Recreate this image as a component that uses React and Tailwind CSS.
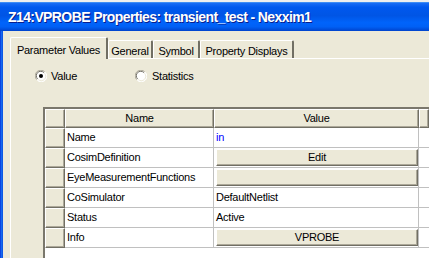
import React from "react";

const raised =
  "bg-[#ece9d8] border-t border-l border-r border-b border-t-white border-l-white border-r-[#716f64] border-b-[#716f64] shadow-[inset_-1px_-1px_0_#aca899]";

const rows = [
  { name: "Name", value: "in", blue: true },
  { name: "CosimDefinition", value: "Edit", button: true },
  { name: "EyeMeasurementFunctions", value: "", button: true },
  { name: "CoSimulator", value: "DefaultNetlist" },
  { name: "Status", value: "Active" },
  { name: "Info", value: "VPROBE", button: true },
];

const Radio = ({ checked }) => (
  <svg width="12" height="12" viewBox="0 0 12 12">
    <circle cx="6" cy="6" r="5.5" fill="#ffffff" />
    <path d="M1.8 9.7 A5.2 5.2 0 0 1 9.7 1.8" fill="none" stroke="#aca899" strokeWidth="1" />
    <path d="M2.6 8.9 A4.2 4.2 0 0 1 8.9 2.6" fill="none" stroke="#716f64" strokeWidth="1" />
    <path d="M10.2 2.3 A5.2 5.2 0 0 1 2.3 10.2" fill="none" stroke="#ffffff" strokeWidth="1" />
    <path d="M9.4 3.1 A4.2 4.2 0 0 1 3.1 9.4" fill="none" stroke="#ece9d8" strokeWidth="1" />
    {checked && <circle cx="6" cy="6" r="2" fill="#000000" />}
  </svg>
);

const Tab = ({ label, width, selected }) => (
  <div
    className={
      selected
        ? "relative z-10 -mb-px h-[22px] flex items-start justify-center pt-[4px] bg-[#ece9d8] border-t border-l border-t-white border-l-white border-r-2 border-r-[#716f64] rounded-tl-[2px] rounded-tr-[2px]"
        : "h-[18px] flex items-start justify-center pt-[2px] bg-[#ece9d8] border-t border-l border-t-white border-l-white border-r-2 border-r-[#716f64] rounded-tl-[2px] rounded-tr-[2px]"
    }
    style={{ width }}
  >
    {label}
  </div>
);

export default function App() {
  return (
    <div className="w-[429px] h-[258px] overflow-hidden bg-[#ece9d8] flex flex-col font-['Liberation_Sans',Arial,sans-serif] text-[11px] tracking-[-0.25px] text-black">
      <div className="h-[2px] bg-[#eeeeee] shrink-0" />
      <div className="h-[29px] shrink-0 flex items-center pl-[8px] border-t border-t-[#3d8cf5] bg-[linear-gradient(to_bottom,#1a6df5_0%,#0058ee_15%,#0055e5_45%,#0064fb_70%,#0060f5_85%,#0043cc_100%)]">
        <span className="text-white font-bold text-[14px] tracking-[-0.6px] [text-shadow:1px_1px_0_#0a1e8c] whitespace-nowrap">
          Z14:VPROBE Properties: transient_test - Nexxim1
        </span>
      </div>

      <div className="flex flex-1 min-h-0">
        <div className="w-[3px] shrink-0 bg-[linear-gradient(to_right,#0831d9,#166aee,#0a4ee0)]" />
        <div className="flex-1 flex flex-col pl-[7px] pt-[6px] min-w-0">
          {/* tabs */}
          <div className="flex items-end h-[21px] shrink-0">
            <Tab label="Parameter Values" width={98} selected />
            <Tab label="General" width={45} />
            <Tab label="Symbol" width={47} />
            <Tab label="Property Displays" width={94} />
          </div>

          {/* panel */}
          <div className="flex-1 flex flex-col border-t border-l border-white min-h-0">
            <div className="flex items-center h-[12px] mt-[11px] ml-[24px]">
              <div className="flex items-center gap-[4px] w-[100px]">
                <Radio checked />
                <span>Value</span>
              </div>
              <div className="flex items-center gap-[5px]">
                <Radio />
                <span>Statistics</span>
              </div>
            </div>

            {/* property grid */}
            <div className="mt-[25px] ml-[32px] flex-1 bg-white border-t-2 border-l-2 border-[#7a776c] overflow-hidden">
              <div className="grid grid-cols-[20px_149px_205px_1fr] auto-rows-min">
                <div className={raised + " h-[19px]"} />
                <div className={raised + " h-[19px] flex items-center justify-center"}>Name</div>
                <div className={raised + " h-[19px] flex items-center justify-center"}>Value</div>
                <div className={raised + " h-[19px]"} />

                {rows.map((r) => (
                  <React.Fragment key={r.name}>
                    <div className={raised + " h-[20px]"} />
                    <div className="h-[20px] flex items-center pl-[2px] border-r border-b border-[#c0c0c0] whitespace-nowrap">
                      {r.name}
                    </div>
                    <div className="h-[20px] flex items-center border-r border-b border-[#c0c0c0]">
                      {r.button ? (
                        <div className={raised + " ml-[2px] w-full h-[17px] flex items-center justify-center"}>
                          {r.value}
                        </div>
                      ) : (
                        <span className={r.blue ? "pl-[2px] text-[#0000ff]" : "pl-[2px]"}>{r.value}</span>
                      )}
                    </div>
                    <div className="h-[20px] border-b border-[#c0c0c0]" />
                  </React.Fragment>
                ))}
              </div>
            </div>
          </div>
        </div>
      </div>
    </div>
  );
}
